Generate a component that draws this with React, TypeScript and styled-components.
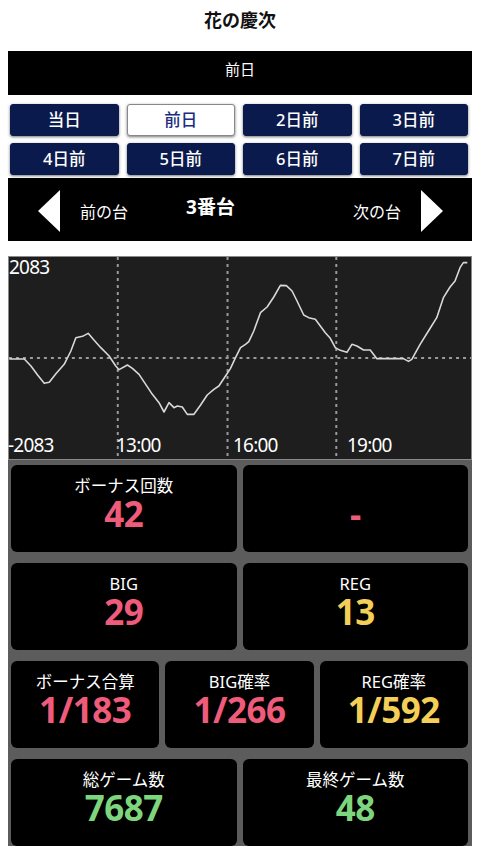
import { styled, createGlobalStyle } from 'styled-components'

const GlobalStyle = createGlobalStyle`
  body {
    margin: 0;
    background: #fff;
    font-family: 'Noto Sans', 'Noto Sans CJK JP', sans-serif;
  }
`

const Page = styled.div`
  width: 480px;
  padding: 0 8px;
  box-sizing: border-box;
`

const Title = styled.h1`
  margin: 0;
  height: 40px;
  padding-top: 6px;
  box-sizing: border-box;
  text-align: center;
  font-size: 18px;
  font-weight: 700;
  color: #111;
  font-family: 'Noto Sans CJK JP', sans-serif;
`

const DayBar = styled.div`
  margin-top: 11px;
  height: 44px;
  background: #000;
  color: #fff;
  font-size: 15px;
  text-align: center;
  padding-top: 7px;
  box-sizing: border-box;
  font-family: 'Noto Sans CJK JP', sans-serif;
`

const DayGrid = styled.div`
  display: grid;
  grid-template-columns: repeat(4, 1fr);
  column-gap: 8px;
  row-gap: 7px;
  padding: 9px 4px 3px 2px;
`

const DayButton = styled.button<{ $active?: boolean }>`
  height: 32px;
  border-radius: 3px;
  border: 1px solid ${(p) => (p.$active ? '#888' : '#0b1a4c')};
  background: ${(p) => (p.$active ? '#fff' : '#0b1a4c')};
  color: ${(p) => (p.$active ? '#1b2d7c' : '#fff')};
  box-shadow: 0 1px 3px rgba(0, 0, 0, 0.55);
  font-size: 16.5px;
  font-weight: 500;
  font-family: 'Noto Sans', 'Noto Sans CJK JP', sans-serif;
  padding: 0 0 2px;
  cursor: pointer;
`

const NavBar = styled.div`
  height: 63px;
  background: #000;
  color: #fff;
  display: flex;
  align-items: center;
  padding: 0 29px 0 30px;
  font-family: 'Noto Sans', 'Noto Sans CJK JP', sans-serif;
`

const NavLink = styled.div<{ $right?: boolean }>`
  display: flex;
  align-items: center;
  gap: 20px;
  font-size: 16px;
  padding-top: 2px;
  flex-direction: ${(p) => (p.$right ? 'row-reverse' : 'row')};
`

const NavTitle = styled.div`
  flex: 1;
  font-size: 19px;
  font-weight: 700;
  padding: 0 0 8px 58px;
`

const Chart = styled.div`
  position: relative;
  margin-top: 15px;
  height: 204px;
  background: #1e1e1e;
  border: 1px solid #8a8a8a;
  box-sizing: border-box;
`

const ChartSvg = styled.svg`
  display: block;
  width: 100%;
  height: 100%;
`

const AxisLabel = styled.span<{ $x: number; $y: number }>`
  position: absolute;
  left: ${(p) => p.$x}px;
  top: ${(p) => p.$y}px;
  color: #fff;
  font-size: 19px;
  line-height: 20px;
  letter-spacing: -0.8px;
  font-family: 'Noto Sans', sans-serif;
`

const Stats = styled.div`
  background: #5c5c5c;
  padding: 5px 4px 3px 3px;
  display: flex;
  flex-direction: column;
  gap: 11px;
`

const StatRow = styled.div<{ $cols: number }>`
  display: grid;
  grid-template-columns: repeat(${(p) => p.$cols}, 1fr);
  gap: 6px;
`

const Card = styled.div`
  height: 87px;
  background: #000;
  border-radius: 6px;
  display: flex;
  flex-direction: column;
  align-items: center;
  padding-top: 11px;
  box-sizing: border-box;
  font-family: 'Noto Sans', 'Noto Sans CJK JP', sans-serif;
`

const CardLabel = styled.div`
  color: #fff;
  font-size: 16.5px;
  line-height: 20px;
  height: 20px;
`

const CardValue = styled.div<{ $color: string }>`
  color: ${(p) => p.$color};
  font-size: 35px;
  font-weight: 700;
  line-height: 36px;
  letter-spacing: -0.5px;
`

const PINK = '#ef5b7a'
const YELLOW = '#f4cf57'
const GREEN = '#7dd67e'

const Triangle = ({ dir }: { dir: 'left' | 'right' }) => (
  <svg width="22" height="42" viewBox="0 0 22 42">
    <polygon points={dir === 'left' ? '22,0 22,42 0,21' : '0,0 0,42 22,21'} fill="#fff" />
  </svg>
)

// traced from the reference at 3x scale
const raw = [
  [25, 324], [70, 324], [90, 345], [110, 372], [130, 397], [145, 394], [165, 368], [190, 340],
  [210, 300], [225, 260], [245, 256], [262, 247], [280, 268], [300, 290], [325, 315], [345, 345],
  [355, 356], [380, 342], [395, 352], [415, 370], [435, 400], [455, 430], [475, 455], [490, 483],
  [505, 455], [520, 470], [530, 465], [545, 468], [560, 490], [580, 490], [600, 462], [620, 432],
  [640, 415], [655, 405], [675, 375], [690, 352], [705, 320], [720, 290], [735, 280], [745, 272],
  [760, 240], [780, 185], [800, 168], [820, 138], [840, 103], [858, 104], [875, 120], [890, 150],
  [910, 192], [925, 200], [945, 205], [960, 225], [975, 245], [990, 262], [1005, 290], [1020, 298],
  [1040, 304], [1055, 280], [1070, 285], [1090, 297], [1110, 297], [1130, 323], [1210, 323],
  [1225, 331], [1235, 325], [1260, 280], [1285, 240], [1310, 200], [1330, 140], [1350, 108],
  [1365, 90], [1380, 50], [1390, 35], [1402, 35],
]
const linePoints = raw.map(([x, y]) => `${x / 3 - 8},${y / 3 + 250 - 256}`).join(' ')

const gridX = [109, 219, 328]

const days = ['当日', '前日', '2日前', '3日前', '4日前', '5日前', '6日前', '7日前']

const App = () => {
  return (
    <Page>
      <GlobalStyle />
      <Title>花の慶次</Title>
      <DayBar>前日</DayBar>
      <DayGrid>
        {days.map((d) => (
          <DayButton key={d} $active={d === '前日'}>
            {d}
          </DayButton>
        ))}
      </DayGrid>
      <NavBar>
        <NavLink>
          <Triangle dir="left" />
          前の台
        </NavLink>
        <NavTitle>3番台</NavTitle>
        <NavLink $right>
          <Triangle dir="right" />
          次の台
        </NavLink>
      </NavBar>
      <Chart>
        <ChartSvg viewBox="0 0 463 202" preserveAspectRatio="none">
          {gridX.map((x) => (
            <line key={x} x1={x} y1={0} x2={x} y2={202} stroke="#9a9a9a" strokeWidth="2" strokeDasharray="3 4" />
          ))}
          <line x1={0} y1={101} x2={463} y2={101} stroke="#9a9a9a" strokeWidth="2" strokeDasharray="3 4" />
          <polyline points={linePoints} fill="none" stroke="#d8d8d8" strokeWidth="1.6" strokeLinejoin="round" />
        </ChartSvg>
        <AxisLabel $x={0} $y={0}>2083</AxisLabel>
        <AxisLabel $x={-1} $y={178}>-2083</AxisLabel>
        <AxisLabel $x={107} $y={178}>13:00</AxisLabel>
        <AxisLabel $x={224} $y={178}>16:00</AxisLabel>
        <AxisLabel $x={338} $y={178}>19:00</AxisLabel>
      </Chart>
      <Stats>
        <StatRow $cols={2}>
          <Card>
            <CardLabel>ボーナス回数</CardLabel>
            <CardValue $color={PINK}>42</CardValue>
          </Card>
          <Card>
            <CardLabel />
            <CardValue $color={PINK}>-</CardValue>
          </Card>
        </StatRow>
        <StatRow $cols={2}>
          <Card>
            <CardLabel>BIG</CardLabel>
            <CardValue $color={PINK}>29</CardValue>
          </Card>
          <Card>
            <CardLabel>REG</CardLabel>
            <CardValue $color={YELLOW}>13</CardValue>
          </Card>
        </StatRow>
        <StatRow $cols={3}>
          <Card>
            <CardLabel>ボーナス合算</CardLabel>
            <CardValue $color={PINK}>1/183</CardValue>
          </Card>
          <Card>
            <CardLabel>BIG確率</CardLabel>
            <CardValue $color={PINK}>1/266</CardValue>
          </Card>
          <Card>
            <CardLabel>REG確率</CardLabel>
            <CardValue $color={YELLOW}>1/592</CardValue>
          </Card>
        </StatRow>
        <StatRow $cols={2}>
          <Card>
            <CardLabel>総ゲーム数</CardLabel>
            <CardValue $color={GREEN}>7687</CardValue>
          </Card>
          <Card>
            <CardLabel>最終ゲーム数</CardLabel>
            <CardValue $color={GREEN}>48</CardValue>
          </Card>
        </StatRow>
      </Stats>
    </Page>
  )
}

export default App
